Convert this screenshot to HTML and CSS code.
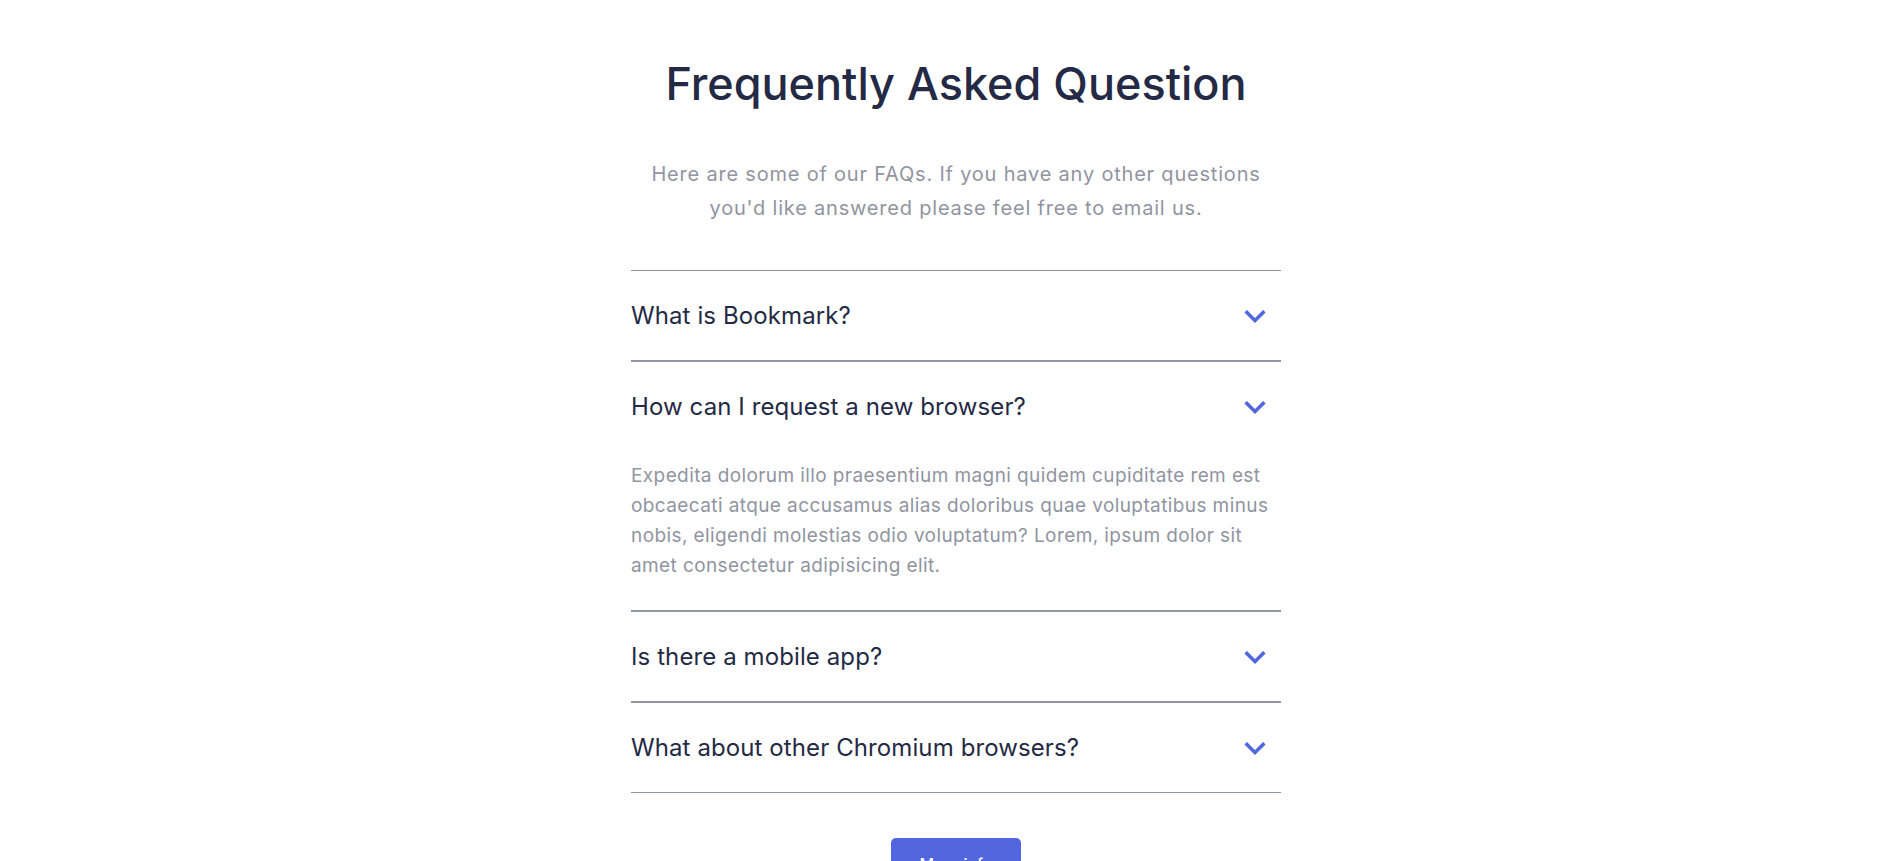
FILE: index.html
```html
<!DOCTYPE html>
<html lang="en">
<head>
<meta charset="utf-8">
<title>FAQ</title>
<link rel="stylesheet" href="styles.css">
</head>
<body>
<main class="faq">
  <h1 class="faq-title">Frequently Asked Question</h1>
  <p class="faq-intro">Here are some of our FAQs. If you have any other questions you'd like answered please feel free to email us.</p>
  <ul class="faq-list">
    <li class="faq-item">
      <div class="faq-q"><span>What is Bookmark?</span>
        <svg class="chev" viewBox="0 0 18 12" width="22" height="14"><path fill="none" stroke="#5267DF" stroke-width="3" d="M1 1l8 8 8-8"/></svg>
      </div>
    </li>
    <li class="faq-item">
      <div class="faq-q"><span>How can I request a new browser?</span>
        <svg class="chev" viewBox="0 0 18 12" width="22" height="14"><path fill="none" stroke="#5267DF" stroke-width="3" d="M1 1l8 8 8-8"/></svg>
      </div>
      <p class="faq-a">Expedita dolorum illo praesentium magni quidem cupiditate rem est obcaecati atque accusamus alias doloribus quae voluptatibus minus nobis, eligendi molestias odio voluptatum? Lorem, ipsum dolor sit amet consectetur adipisicing elit.</p>
    </li>
    <li class="faq-item">
      <div class="faq-q"><span>Is there a mobile app?</span>
        <svg class="chev" viewBox="0 0 18 12" width="22" height="14"><path fill="none" stroke="#5267DF" stroke-width="3" d="M1 1l8 8 8-8"/></svg>
      </div>
    </li>
    <li class="faq-item">
      <div class="faq-q"><span>What about other Chromium browsers?</span>
        <svg class="chev" viewBox="0 0 18 12" width="22" height="14"><path fill="none" stroke="#5267DF" stroke-width="3" d="M1 1l8 8 8-8"/></svg>
      </div>
    </li>
  </ul>
  <button class="more-btn">More info</button>
</main>
</body>
</html>
```

FILE: styles.css
```css
* { box-sizing: border-box; }
html, body { margin: 0; padding: 0; background: #fff; }
body {
  font-family: "Inter", "Open Sans", sans-serif;
  color: #242a45;
  padding-left: 26px;
}
.faq {
  width: 650px;
  margin: 0 auto;
  display: flex;
  flex-direction: column;
  align-items: center;
  padding-top: 52px;
}
.faq-title {
  margin: 0;
  font-size: 45px;
  font-weight: 500;
  line-height: 64px;
  color: #242a45;
  letter-spacing: 0;
}
.faq-intro {
  margin: 41px 0 0;
  max-width: 620px;
  text-align: center;
  font-size: 20px;
  letter-spacing: 0.8px;
  line-height: 34px;
  color: #9194a1;
}
.faq-list {
  list-style: none;
  margin: 45px 0 0;
  padding: 0;
  width: 100%;
}
.faq-item {
  border-top: 1px solid #9194a1;
  border-bottom: 1px solid #9194a1;
}
.faq-q {
  height: 89px;
  display: flex;
  align-items: center;
  justify-content: space-between;
  font-size: 24px;
  letter-spacing: 0.1px;
  color: #242a45;
  padding-right: 15px;
}
.chev { display: block; margin-top: 2px; }
.faq-a {
  margin: 0;
  padding: 10px 0 29px 0;
  font-size: 19px;
  letter-spacing: 0.4px;
  line-height: 30px;
  color: #9194a1;
}
.more-btn {
  margin-top: 45px;
  width: 130px;
  height: 52px;
  border: none;
  border-radius: 5px;
  background: #5267df;
  color: #fff;
  font-family: inherit;
  font-size: 16px;
  font-weight: 500;
}
```
